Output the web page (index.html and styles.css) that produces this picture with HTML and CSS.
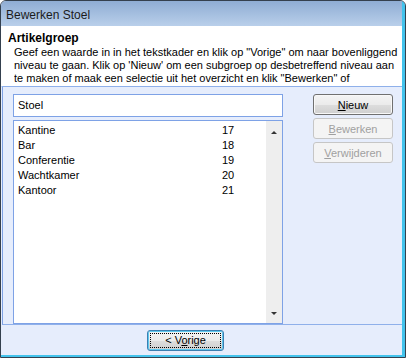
FILE: index.html
```html
<!DOCTYPE html>
<html lang="nl">
<head>
    <meta charset="UTF-8">
    <title>Bewerken Stoel</title>
    <link rel="stylesheet" href="styles.css">
</head>
<body>
    <div class="window">
        <div class="titlebar">Bewerken Stoel</div>

        <div class="header">
            <div class="header-title">Artikelgroep</div>
            <p class="header-text">Geef een waarde in in het tekstkader en klik op "Vorige" om naar bovenliggend niveau te gaan. Klik op 'Nieuw' om een subgroep op desbetreffend niveau aan te maken of maak een selectie uit het overzicht en klik "Bewerken" of</p>
        </div>

        <div class="content">
            <div class="left">
                <div class="textbox">Stoel</div>
                <div class="listbox">
                    <div class="rows">
                        <div class="row"><span class="name">Kantine</span><span class="num">17</span></div>
                        <div class="row"><span class="name">Bar</span><span class="num">18</span></div>
                        <div class="row"><span class="name">Conferentie</span><span class="num">19</span></div>
                        <div class="row"><span class="name">Wachtkamer</span><span class="num">20</span></div>
                        <div class="row"><span class="name">Kantoor</span><span class="num">21</span></div>
                    </div>
                    <div class="scrollbar">
                        <span class="arrow up"></span>
                        <span class="arrow down"></span>
                    </div>
                </div>
            </div>

            <div class="buttons">
                <button class="btn default"><u>N</u>ieuw</button>
                <button class="btn" disabled><u>B</u>ewerken</button>
                <button class="btn" disabled><u>V</u>erwijderen</button>
            </div>
        </div>

        <div class="footer">
            <button class="btn focused"><span class="focus-rect">&lt; V<u>o</u>rige</span></button>
        </div>
    </div>
</body>
</html>
```

FILE: styles.css
```css
body {
    margin: 0;
    font-family: 'Liberation Sans', Arial, sans-serif;
    font-size: 11px;
    color: #000;
    background: #fff;
}

.window {
    width: 406px;
    height: 358px;
    box-sizing: border-box;
    border: 1px solid #34404e;
    border-radius: 6px 6px 0 0;
    display: flex;
    flex-direction: column;
    overflow: hidden;
    background: #e6edfc;
    box-shadow: inset -3px -2px 0 #43c3ec;
}

.titlebar {
    height: 25px;
    box-sizing: border-box;
    padding: 7px 0 0 5px;
    font-size: 12px;
    color: #1b1b1b;
    background: linear-gradient(to bottom, #8fadd4, #b9cfea);
    border-right: 3px solid #43c3ec;
}

.header {
    background: #fff;
    height: 61px;
    box-sizing: border-box;
    padding: 6px 0 0 6px;
    border-bottom: 1px solid #8fb0ea;
    margin-right: 3px;
    border-left: 1px solid #fff;
}

.header-title {
    font-weight: bold;
    font-size: 12px;
    line-height: 13px;
}

.header-text {
    margin: 1px 0 0 6px;
    line-height: 13px;
    width: 385px;
    height: 39px;
    overflow: hidden;
}

.content {
    display: flex;
    padding: 7px 0 0 10px;
    height: 238px;
    box-sizing: border-box;
    border-bottom: 1px solid #8fb0ea;
    margin: 0 3px 0 1px;
    border-left: 1px solid #7fa2e4;
}

.left {
    width: 270px;
    display: flex;
    flex-direction: column;
    gap: 3px;
}

.textbox {
    height: 23px;
    box-sizing: border-box;
    border: 1px solid #7ea2e6;
    background: #fff;
    padding: 4px 0 0 4px;
}

.listbox {
    height: 204px;
    box-sizing: border-box;
    border: 1px solid #7ea2e6;
    background: #fff;
    display: flex;
}

.rows {
    flex: 1;
    padding: 2px 0 0 4px;
}

.row {
    display: flex;
    height: 15px;
    line-height: 15px;
}

.name {
    width: 204px;
}

.scrollbar {
    width: 16px;
    background: #eeeeee;
    position: relative;
}

.arrow {
    position: absolute;
    left: 5px;
    width: 0;
    height: 0;
    border-left: 3px solid transparent;
    border-right: 3px solid transparent;
}

.arrow.up {
    top: 10px;
    border-bottom: 3px solid #333;
}

.arrow.down {
    bottom: 8px;
    border-top: 3px solid #333;
}

.buttons {
    margin-left: 30px;
    display: flex;
    flex-direction: column;
    gap: 3px;
}

.btn {
    width: 80px;
    height: 21px;
    padding: 0;
    font-family: inherit;
    font-size: 11px;
    color: #000;
    border: 1px solid #707070;
    border-radius: 3px;
    background: linear-gradient(to bottom, #f4f4f4 0%, #ebebeb 50%, #dddddd 51%, #cfcfcf 100%);
}

.btn:disabled {
    color: #a0a0a0;
    border-color: #c6c6c6;
    background: #f4f4f4;
}

.btn.default {
    box-shadow: inset 0 0 0 1px #f8f8f8;
}

.footer {
    display: flex;
    padding: 5px 0 0 146px;
}

.btn.focused {
    width: 77px;
    border: 1px solid #3c7fb1;
    box-shadow: 0 0 0 1px #5fc8ee inset;
    padding: 2px;
}

.focus-rect {
    display: block;
    height: 100%;
    box-sizing: border-box;
    border: 1px dotted #000;
    line-height: 13px;
}
```
